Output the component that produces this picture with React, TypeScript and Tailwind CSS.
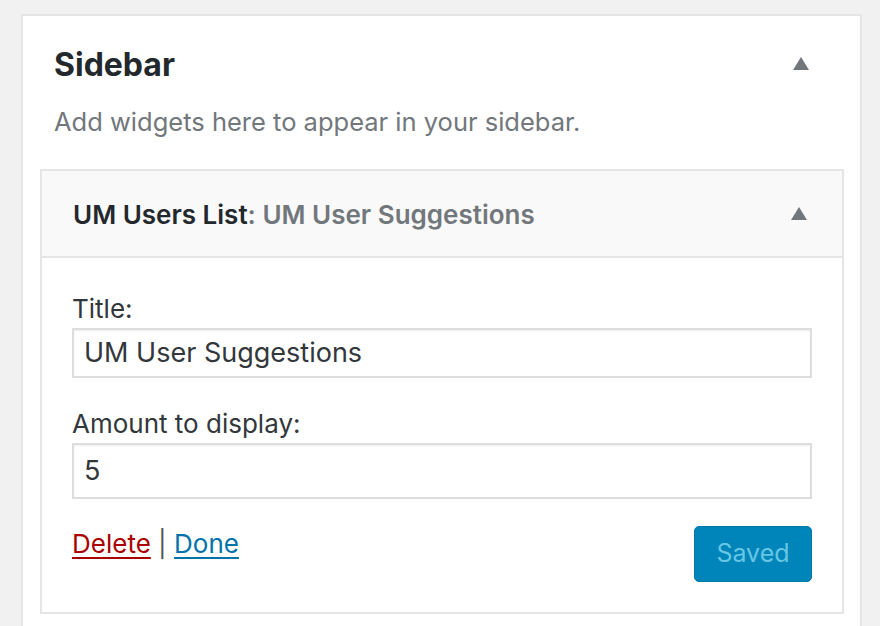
import React from "react";

const font = { fontFamily: "Inter, 'Noto Sans', sans-serif" };

function Caret() {
    return (
        <svg width="16" height="13" viewBox="0 0 16 13" className="block">
            <polygon points="8,0 16,13 0,13" fill="#72777c" />
        </svg>
    );
}

export default function App() {
    return (
        <div className="min-h-[626px] w-[880px] overflow-hidden bg-[#f1f1f1] pt-[14px] pl-[21px]" style={font}>
            <div className="h-[700px] w-[841px] border-2 border-[#e5e5e5] bg-white">
                <div className="flex items-center justify-between pl-[31px] pr-[51px] pt-[29px]">
                    <h2 className="text-[32px] font-bold leading-[40px] text-[#23282d]">Sidebar</h2>
                    <div className="mb-[4px]">
                        <Caret />
                    </div>
                </div>
                <p className="pl-[31px] pt-[21px] text-[25.5px] leading-[32px] text-[#72777c]">
                    Add widgets here to appear in your sidebar.
                </p>

                <div className="ml-[17px] mt-[31px] w-[804px] border-2 border-[#e5e5e5]">
                    <div className="flex h-[87px] items-center justify-between border-b-2 border-[#e5e5e5] bg-[#f9f9f9] pl-[31px] pr-[35px]">
                        <h3 className="pt-[2px] text-[26px] font-semibold text-[#23282d]">
                            UM Users List<span className="text-[#72777c]">: UM User Suggestions</span>
                        </h3>
                        <Caret />
                    </div>

                    <div className="px-[30px] pt-[36px] pb-[30px] text-[#32373c]">
                        <label className="block text-[26px] leading-[30px]">Title:</label>
                        <div className="mt-[4px] flex h-[50px] items-center border-2 border-[#dddddd] px-[10px] text-[27px] shadow-[inset_0_1px_2px_rgba(0,0,0,0.07)]">
                            UM User Suggestions
                        </div>

                        <label className="mt-[31px] block text-[26px] leading-[30px]">Amount to display:</label>
                        <div className="mt-[4px] flex h-[56px] items-center border-2 border-[#dddddd] px-[10px] text-[27px] shadow-[inset_0_1px_2px_rgba(0,0,0,0.07)]">
                            5
                        </div>

                        <div className="mt-[27px] flex items-start justify-between">
                            <div className="pt-[2px] text-[26px] leading-[32px]">
                                <a className="text-[#a00] underline underline-offset-[4px]">Delete</a>
                                <span className="text-[#555]"> | </span>
                                <a className="text-[#0073aa] underline underline-offset-[4px]">Done</a>
                            </div>
                            <button className="h-[56px] w-[118px] rounded-[5px] border border-[#0079a8] bg-[#0085ba] text-[25px] text-[#66c6e4]">
                                Saved
                            </button>
                        </div>
                    </div>
                </div>
            </div>
        </div>
    );
}
